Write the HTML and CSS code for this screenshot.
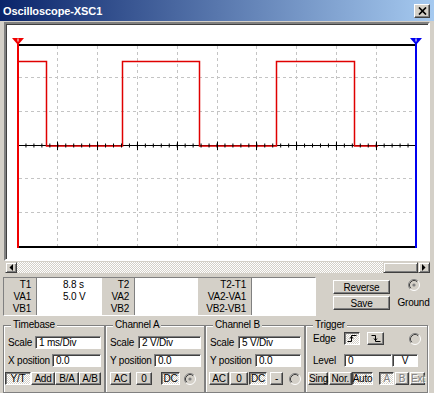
FILE: index.html
```html
<!DOCTYPE html>
<html lang="en">
<head>
    <meta charset="UTF-8">
    <title>Oscilloscope-XSC1</title>
    <link rel="stylesheet" href="styles.css">
</head>
<body>
    <div class="window">
        <div class="titlebar">
            <span class="title">Oscilloscope-XSC1</span>
            <span class="close-btn">
                <svg width="9" height="8" viewBox="0 0 9 8"><path d="M1 0.5L8 7.5M8 0.5L1 7.5" stroke="#000" stroke-width="1.7"/></svg>
            </span>
        </div>

        <div class="scope">
            <svg class="screen" width="422" height="235" viewBox="6 24 422 235">
                <!-- grid -->
                <g stroke="#c4c4c4" stroke-dasharray="3 3" fill="none">
                    <path d="M57.5 46V246M97.5 46V246M137.5 46V246M177.5 46V246M217.5 46V246M256.5 46V246M296.5 46V246M336.5 46V246M376.5 46V246"/>
                    <path d="M19 77.5H415M19 111.5H415M19 178.5H415M19 212.5H415"/>
                </g>
                <path d="M19 145.5H415" stroke="#000"/>
                <!-- channel A trace -->
                <path d="M19 61.5H46.5V146H122.5V61.5H199.5V146H276.5V61.5H354.5V146H378" fill="none" stroke="#e00000" stroke-width="1.5"/>
                <!-- axis ticks -->
                <path d="M17.5 145.5H417" stroke="#000" stroke-width="4" stroke-dasharray="1 6.96"/>
                <path d="M57.5 141.5V150M97.5 141.5V150M137.5 141.5V150M177.5 141.5V150M217.5 141.5V150M256.5 141.5V150M296.5 141.5V150M336.5 141.5V150M376.5 141.5V150" stroke="#000"/>
                <!-- frame -->
                <rect x="17" y="44" width="400" height="2" fill="#000"/>
                <rect x="17" y="246" width="400" height="2" fill="#000"/>
                <!-- cursors -->
                <rect x="17" y="40" width="2" height="208" fill="#f00000"/>
                <rect x="415" y="40" width="2" height="208" fill="#0000f0"/>
                <polygon points="12,38 24,38 18,45" fill="#f00000"/>
                <polygon points="410,38 422,38 416,45" fill="#0000f0"/>
                <path d="M18 38.5V41.5M416 38.5V41.5" stroke="#fff"/>
            </svg>
        </div>

        <div class="hscroll">
            <span class="sb-arrow">
                <svg width="4" height="7" viewBox="0 0 4 7"><polygon points="4,0 4,7 0.5,3.5" fill="#000"/></svg>
            </span>
            <span class="sb-track"></span>
            <span class="sb-thumb"></span>
            <span class="sb-arrow">
                <svg width="4" height="7" viewBox="0 0 4 7"><polygon points="0,0 0,7 3.5,3.5" fill="#000"/></svg>
            </span>
        </div>

        <div class="readout">
            <div class="cursors">
                <div class="tag tag-t1">T1<br>VA1<br>VB1</div>
                <div class="val val-t1">8.8 s<br>5.0 V</div>
                <div class="tag tag-t2">T2<br>VA2<br>VB2</div>
                <div class="val val-t2"></div>
                <div class="tag tag-diff">T2-T1<br>VA2-VA1<br>VB2-VB1</div>
                <div class="val val-diff"></div>
            </div>
            <div class="actions">
                <button class="btn btn-wide">Reverse</button>
                <button class="btn btn-wide">Save</button>
            </div>
            <div class="ground">
                <svg class="radio" width="12" height="12" viewBox="0 0 12 12">
                    <circle cx="6" cy="6" r="4.5" fill="#d4d0c8"/>
                    <path d="M9.89 2.11A5.5 5.5 0 0 0 2.11 9.89" fill="none" stroke="#808080"/>
                    <path d="M2.11 9.89A5.5 5.5 0 0 0 9.89 2.11" fill="none" stroke="#fff"/>
                    <path d="M9.18 2.82A4.5 4.5 0 0 0 2.82 9.18" fill="none" stroke="#404040"/>
                    <circle cx="6" cy="6" r="1.6" fill="#808080"/>
                </svg>
                <span>Ground</span>
            </div>
        </div>

        <div class="controls">
            <fieldset class="group timebase">
                <legend>Timebase</legend>
                <div class="rows">
                    <div class="row"><span class="lbl">Scale</span><span class="field tb-scale">1 ms/Div</span></div>
                    <div class="row"><span class="lbl">X position</span><span class="field tb-pos">0.0</span></div>
                    <div class="btns">
                        <button class="btn down tb-yt">Y/T</button>
                        <button class="btn tb-add">Add</button>
                        <button class="btn tb-ba">B/A</button>
                        <button class="btn tb-ab">A/B</button>
                    </div>
                </div>
            </fieldset>

            <fieldset class="group chan-a">
                <legend>Channel A</legend>
                <div class="rows">
                    <div class="row"><span class="lbl">Scale</span><span class="field ch-scale">2 V/Div</span></div>
                    <div class="row"><span class="lbl">Y position</span><span class="field cha-pos">0.0</span></div>
                    <div class="btns">
                        <button class="btn cha-ac">AC</button>
                        <button class="btn cha-zero">0</button>
                        <button class="btn down cha-dc">DC</button>
                        <svg class="radio cha-radio" width="12" height="12" viewBox="0 0 12 12">
                            <circle cx="6" cy="6" r="4.5" fill="#d4d0c8"/>
                            <path d="M9.89 2.11A5.5 5.5 0 0 0 2.11 9.89" fill="none" stroke="#808080"/>
                            <path d="M2.11 9.89A5.5 5.5 0 0 0 9.89 2.11" fill="none" stroke="#fff"/>
                            <path d="M9.18 2.82A4.5 4.5 0 0 0 2.82 9.18" fill="none" stroke="#404040"/>
                            <circle cx="6" cy="6" r="1.6" fill="#808080"/>
                        </svg>
                    </div>
                </div>
            </fieldset>

            <fieldset class="group chan-b">
                <legend>Channel B</legend>
                <div class="rows">
                    <div class="row"><span class="lbl">Scale</span><span class="field ch-scale">5 V/Div</span></div>
                    <div class="row"><span class="lbl">Y position</span><span class="field chb-pos">0.0</span></div>
                    <div class="btns">
                        <button class="btn chb-ac">AC</button>
                        <button class="btn chb-zero">0</button>
                        <button class="btn down chb-dc">DC</button>
                        <button class="btn chb-minus">-</button>
                        <svg class="radio chb-radio" width="12" height="12" viewBox="0 0 12 12">
                            <circle cx="6" cy="6" r="4.5" fill="#d4d0c8"/>
                            <path d="M9.89 2.11A5.5 5.5 0 0 0 2.11 9.89" fill="none" stroke="#808080"/>
                            <path d="M2.11 9.89A5.5 5.5 0 0 0 9.89 2.11" fill="none" stroke="#fff"/>
                            <path d="M9.18 2.82A4.5 4.5 0 0 0 2.82 9.18" fill="none" stroke="#404040"/>
                        </svg>
                    </div>
                </div>
            </fieldset>

            <fieldset class="group trigger">
                <legend>Trigger</legend>
                <div class="rows">
                    <div class="row edge-row">
                        <span class="lbl trig-label">Edge</span>
                        <button class="btn down edge-up">
                            <svg width="10" height="9" viewBox="0 0 10 9"><path d="M0.5 7.5H4.5V1.5H9.5M3 4.5L4.5 2.5L6 4.5" fill="none" stroke="#000"/></svg>
                        </button>
                        <button class="btn edge-down">
                            <svg width="10" height="9" viewBox="0 0 10 9"><path d="M0.5 1.5H4.5V7.5H9.5M3 4.5L4.5 6.5L6 4.5" fill="none" stroke="#000"/></svg>
                        </button>
                        <svg class="radio trig-radio" width="12" height="12" viewBox="0 0 12 12">
                            <circle cx="6" cy="6" r="4.5" fill="#d4d0c8"/>
                            <path d="M9.89 2.11A5.5 5.5 0 0 0 2.11 9.89" fill="none" stroke="#808080"/>
                            <path d="M2.11 9.89A5.5 5.5 0 0 0 9.89 2.11" fill="none" stroke="#fff"/>
                            <path d="M9.18 2.82A4.5 4.5 0 0 0 2.82 9.18" fill="none" stroke="#404040"/>
                        </svg>
                    </div>
                    <div class="row level-row">
                        <span class="lbl trig-label">Level</span>
                        <span class="field level">0</span>
                        <span class="field unit">V</span>
                    </div>
                    <div class="btns">
                        <button class="btn tr-sing">Sing.</button>
                        <button class="btn tr-nor">Nor.</button>
                        <button class="btn down tr-auto">Auto</button>
                        <button class="btn down off tr-a">A</button>
                        <button class="btn off tr-b">B</button>
                        <button class="btn off tr-ext">Ext</button>
                    </div>
                </div>
            </fieldset>
        </div>
    </div>
</body>
</html>
```

FILE: styles.css
```css
* {
    box-sizing: border-box;
}

body {
    margin: 0;
    background: #d4d0c8;
    font-family: "Liberation Sans", Arial, sans-serif;
    font-size: 10px;
    letter-spacing: -0.2px;
    color: #000;
}

.window {
    width: 434px;
    height: 393px;
    overflow: hidden;
}

/* title bar */
.titlebar {
    height: 21px;
    display: flex;
    align-items: center;
    justify-content: space-between;
    padding: 0 4px 0 3px;
    background: linear-gradient(to right, #0a246a, #a6caf0);
}
.title {
    color: #fff;
    font-weight: bold;
    font-size: 11px;
    letter-spacing: -0.1px;
}
.close-btn {
    width: 16px;
    height: 14px;
    display: flex;
    align-items: center;
    justify-content: center;
    background: #d4d0c8;
    border: 1px solid;
    border-color: #fff #404040 #404040 #fff;
    box-shadow: inset -1px -1px #808080;
}

/* scope screen */
.scope {
    margin: 1px 4px 0;
    height: 239px;
    border: 2px solid;
    border-color: #808080 #fff #fff #808080;
    background: #fff;
    box-shadow: inset 1px 1px #404040;
}
.screen {
    display: block;
}

.hscroll {
    display: flex;
    height: 11px;
    margin: 1px 4px 0 5px;
}
.sb-arrow,
.sb-thumb {
    display: flex;
    align-items: center;
    justify-content: center;
    background: #d4d0c8;
    border: 1px solid;
    border-color: #d4d0c8 #404040 #404040 #d4d0c8;
    box-shadow: inset 1px 1px #fff, inset -1px -1px #808080;
}
.sb-arrow {
    width: 12px;
}
.sb-thumb {
    width: 35px;
}
.sb-track {
    flex: 1;
    background: repeating-conic-gradient(#fff 0 25%, #d4d0c8 0 50%) 0 0 / 2px 2px;
}

/* cursor readout */
.readout {
    display: flex;
    height: 39px;
    margin-top: 4px;
    padding-left: 3px;
}
.cursors {
    display: flex;
    width: 313px;
    border: 1px solid;
    border-color: #808080 #fff #fff #808080;
}
.tag {
    padding: 1px 5px 0 0;
    text-align: right;
    line-height: 12px;
    border-left: 1px solid #fff;
}
.val {
    background: #fff;
    border-left: 1px solid #808080;
    padding-top: 1px;
    line-height: 12px;
}
.tag-t1 {
    width: 32px;
    border-left: 0;
}
.val-t1 {
    width: 65px;
    padding-left: 26px;
}
.tag-t2 {
    width: 33px;
}
.val-t2 {
    width: 63px;
}
.tag-diff {
    width: 54px;
}
.val-diff {
    width: 64px;
}

.actions {
    display: flex;
    flex-direction: column;
    gap: 2px;
    margin-left: 17px;
    padding-top: 3px;
}
.ground {
    display: flex;
    flex-direction: column;
    align-items: center;
    width: 33px;
    margin-left: 7px;
    padding-top: 2px;
    line-height: 12px;
}
.ground .radio {
    margin-bottom: 6px;
}
.radio {
    display: block;
    flex: none;
}

/* buttons */
.btn {
    height: 13px;
    padding: 0;
    margin: 0;
    font: inherit;
    letter-spacing: inherit;
    line-height: 11px;
    color: #000;
    text-align: center;
    white-space: nowrap;
    background: #d4d0c8;
    border: 1px solid;
    border-color: #fff #404040 #404040 #fff;
    box-shadow: inset -1px -1px #808080;
}
.btn.down {
    border-color: #404040 #fff #fff #404040;
    box-shadow: inset 1px 1px #808080;
    background: repeating-conic-gradient(#fff 0 25%, #d4d0c8 0 50%) 0 0 / 2px 2px;
}
.btn.off {
    color: #808080;
    text-shadow: 1px 1px #fff;
}
.btn-wide {
    width: 57px;
    height: 14px;
}

/* control groups */
.controls {
    display: flex;
    height: 74px;
    margin-top: 3px;
    padding-left: 3px;
}
.group {
    margin: 0;
    padding: 5px 2px 0;
    min-width: 0;
    border: 1px solid #808080;
    box-shadow: inset 1px 1px #fff, 1px 1px #fff;
}
.group legend {
    margin-left: 5px;
    padding: 0 2px;
    line-height: 12px;
    background: #d4d0c8;
}
.timebase {
    width: 102px;
}
.chan-a,
.chan-b {
    width: 100px;
}
.trigger {
    width: 123px;
}

.rows {
    display: flex;
    flex-direction: column;
    gap: 5px;
}
.row {
    display: flex;
    align-items: center;
    height: 13px;
    padding: 0 1px 0 2px;
}
.lbl {
    flex: none;
    white-space: nowrap;
}
.row .field {
    margin-left: auto;
}
.btns {
    display: flex;
    align-items: center;
    height: 13px;
}

.field {
    display: block;
    flex: none;
    height: 13px;
    padding-left: 3px;
    line-height: 11px;
    white-space: nowrap;
    background: #fff;
    border: 1px solid;
    border-color: #808080 #fff #fff #808080;
    box-shadow: inset 1px 1px #404040;
}

.tb-scale { width: 66px; }
.tb-pos { width: 49px; }
.ch-scale { width: 63px; }
.cha-pos { width: 47px; }
.chb-pos { width: 46px; }

.tb-yt { width: 26px; margin-left: -1px; }
.tb-add { width: 24px; }
.tb-ba { width: 24px; }
.tb-ab { width: 22px; }

.cha-ac { width: 21px; margin-left: 2px; }
.cha-zero { width: 16px; margin-left: 5px; }
.cha-dc { width: 19px; margin-left: 9px; }
.cha-radio { margin-left: 4px; }

.chb-ac { width: 20px; margin-left: 1px; }
.chb-zero { width: 18px; margin-left: 1px; }
.chb-dc { width: 18px; margin-left: 1px; }
.chb-minus { width: 13px; margin-left: 3px; }
.chb-radio { margin-left: 6px; }

/* trigger */
.edge-row {
    margin-top: -4px;
    margin-bottom: 4px;
    padding: 0 4px 0 5px;
}
.level-row {
    padding-left: 5px;
}
.trig-label {
    width: 31px;
}
.edge-up,
.edge-down {
    display: flex;
    align-items: center;
    justify-content: center;
}
.edge-up { width: 16px; }
.edge-down { width: 17px; margin-left: 7px; }
.trig-radio { margin-left: auto; }
.row .field.level {
    width: 48px;
    margin-left: 0;
}
.row .field.unit {
    width: 26px;
    margin-left: 0;
    padding: 0;
    text-align: center;
}

.tr-sing { width: 20px; }
.tr-nor { width: 23px; margin-left: 1px; }
.tr-auto { width: 22px; }
.tr-a { width: 15px; margin-left: 6px; }
.tr-b { width: 14px; margin-left: 1px; }
.tr-ext { width: 15px; margin-left: 1px; }
```
